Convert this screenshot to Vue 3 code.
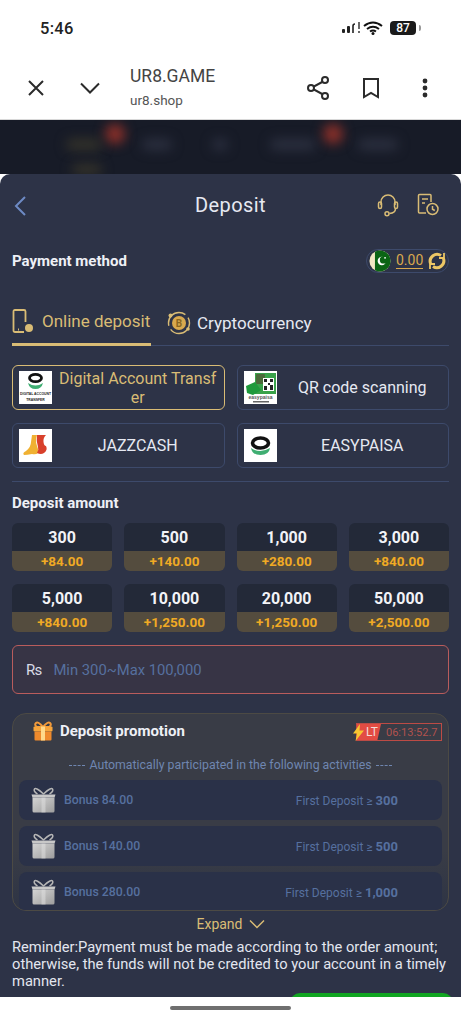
<template>
  <div class="phone">
    <!-- status bar -->
    <div class="status">
      <span class="time">5:46</span>
      <div class="status-right">
        <svg width="20" height="14" viewBox="0 0 20 14"><rect x="1" y="8" width="3" height="4" rx="1" fill="#222"/><rect x="6" y="5" width="3" height="7" rx="1" fill="#222"/><path d="M12 12V5q0-2 2-2" fill="none" stroke="#222" stroke-width="1.6"/><path d="M18 1v7M18 10v2" stroke="#444" stroke-width="1.6"/></svg>
        <svg width="20" height="14" viewBox="0 0 20 14"><path d="M1 5q9-7 18 0M4 8q6-4.500 12 0M7 10.500q3-2 6 0" fill="none" stroke="#111" stroke-width="2"/><circle cx="10" cy="12.500" r="1.500" fill="#111"/></svg>
        <div class="battery"><span>87</span></div>
        <i class="battery-tip"></i>
      </div>
    </div>

    <!-- browser bar -->
    <div class="browser">
      <svg class="close" width="18" height="18" viewBox="0 0 18 18"><path d="M2 2l14 14M16 2L2 16" stroke="#2b2b2b" stroke-width="2" fill="none"/></svg>
      <svg class="down" width="22" height="14" viewBox="0 0 22 14"><path d="M2 2.500l9 9 9-9" stroke="#2b2b2b" stroke-width="2" fill="none"/></svg>
      <div class="url">
        <div class="url-title">UR8.GAME</div>
        <div class="url-sub">ur8.shop</div>
      </div>
      <div class="b-actions">
        <svg width="24" height="26" viewBox="0 0 24 26"><path d="M19 5.500L5 13l14 7.500" stroke="#2b2b2b" stroke-width="2" fill="none"/><circle cx="19" cy="5" r="3" fill="#fff" stroke="#2b2b2b" stroke-width="2"/><circle cx="5" cy="13" r="3" fill="#fff" stroke="#2b2b2b" stroke-width="2"/><circle cx="19" cy="21" r="3" fill="#fff" stroke="#2b2b2b" stroke-width="2"/></svg>
        <svg width="18" height="22" viewBox="0 0 18 22"><path d="M2 2h14v18l-7-4-7 4z" stroke="#2b2b2b" stroke-width="2" fill="none"/></svg>
        <svg class="dots" width="8" height="20" viewBox="0 0 8 20"><circle cx="4" cy="3" r="2.400" fill="#2b2b2b"/><circle cx="4" cy="10" r="2.400" fill="#2b2b2b"/><circle cx="4" cy="17" r="2.400" fill="#2b2b2b"/></svg>
      </div>
    </div>

    <!-- blurred page behind the sheet -->
    <div class="backdrop">
      <i class="blur red r1"></i>
      <i class="blur red r2"></i>
      <i class="blur gold g1"></i>
      <i class="blur gold g2"></i>
      <i class="blur grey g3"></i>
      <i class="blur grey g4"></i>
      <i class="blur grey g5"></i>
      <i class="blur grey g6"></i>
    </div>

    <!-- deposit sheet -->
    <div class="sheet">
      <div class="head">
        <svg class="back" width="14" height="22" viewBox="0 0 14 22"><path d="M12 2L3 11l9 9" stroke="#6d8ac4" stroke-width="2" fill="none"/></svg>
        <span class="head-title">Deposit</span>
        <div class="head-icons">
          <svg width="22" height="24" viewBox="0 0 22 24" fill="none" stroke="#d9bc75" stroke-width="1.500"><path d="M4 12V9a7 7 0 0 1 14 0v3"/><rect x="1.500" y="9" width="3" height="6.500" rx="1.500"/><rect x="17.500" y="9" width="3" height="6.500" rx="1.500"/><path d="M18.500 15.500q0 4.500-6 5"/><circle cx="10" cy="20.800" r="2"/></svg>
          <svg width="22" height="23" viewBox="0 0 22 23" fill="none" stroke="#d9bc75" stroke-width="1.500"><path d="M9 20H2.500q-1 0-1-1V2.500q0-1 1-1H13q1 0 1 1V9"/><path d="M5 6h6M5 10h3"/><circle cx="15.500" cy="16" r="5.500"/><path d="M15.500 13v3.200l2.300 1.300"/></svg>
        </div>
      </div>

      <div class="pay-row">
        <span class="label">Payment method</span>
        <div class="balance">
          <svg width="22" height="22" viewBox="0 0 24 24"><circle cx="12" cy="12" r="11.500" fill="#f3e7c4"/><path d="M6.500 1.900A11.500 11.500 0 1 1 6.500 22.100z" fill="#0b6414"/><circle cx="14" cy="12" r="4.600" fill="#fff"/><circle cx="15.800" cy="10.800" r="4" fill="#0b6414"/><circle cx="17.500" cy="8.500" r="1" fill="#fff"/></svg>
          <span class="bal-num">0.00</span>
          <svg width="18" height="18" viewBox="0 0 18 18" fill="none" stroke="#edc765" stroke-width="3"><path d="M2.500 11.500A7 7 0 0 1 13 3.500"/><path d="M15.500 6.500A7 7 0 0 1 5 14.500"/><path d="M16 1v5h-5M2 17v-5h5" stroke-width="1.800"/></svg>
        </div>
      </div>

      <div class="tabs">
        <div class="tab active">
          <svg width="23" height="25" viewBox="0 0 23 25" fill="none" stroke="#d9bc75" stroke-width="1.800"><path d="M12 23H3q-1.500 0-1.500-1.500v-19Q1.500 1 3 1h9q1.500 0 1.500 1.500V13"/><circle cx="17" cy="19" r="4" fill="#d9bc75" stroke="none"/><path d="M6 20.500h1"/></svg>
          <span>Online deposit</span>
        </div>
        <div class="tab">
          <svg width="24" height="24" viewBox="0 0 24 24" fill="none"><circle cx="12" cy="12" r="10.500" stroke="#d9bc75" stroke-width="1.400" stroke-dasharray="26 4"/><circle cx="12" cy="12" r="7" fill="#d9a94e"/><text x="12" y="15.500" text-anchor="middle" class="btc">B</text><circle cx="3.500" cy="4.500" r="2" fill="#d9bc75"/><circle cx="21" cy="18" r="1.800" fill="#d9bc75"/></svg>
          <span>Cryptocurrency</span>
        </div>
      </div>

      <div class="methods">
        <div v-for="m in methods" :key="m.name" class="method" :class="{ on: m.on }">
          <div class="logo">
            <svg v-if="m.logo === 'digital'" width="33" height="33" viewBox="0 0 33 33"><ellipse cx="16.500" cy="7" rx="6" ry="3.700" fill="none" stroke="#111" stroke-width="2.800"/><path d="M9 12q7.500 5 15 0-1.500 6-7.500 6T9 12z" fill="#3fae72"/><text x="16.500" y="23.500" text-anchor="middle" class="logo-txt">DIGITAL ACCOUNT</text><text x="16.500" y="30" text-anchor="middle" class="logo-txt">TRANSFER</text></svg>
            <svg v-else-if="m.logo === 'qr'" width="33" height="33" viewBox="0 0 33 33"><rect x="11" y="2" width="21" height="21" fill="#39a24a"/><rect x="12" y="3" width="9" height="10" rx="1" fill="#4b6a3a"/><rect x="19" y="7" width="11" height="13" fill="#fff"/><path d="M20 8h3v3h-3zM26 8h3v3h-3zM20 15h3v4h-3zM24 12h2v2h-2zM26 14h3v5h-3z" fill="#222"/><path d="M2 15l9-4 6 8-8 5-6-2z" fill="#1f9a3c"/><text x="16.500" y="28" text-anchor="middle" class="logo-ep">easypaisa</text><rect x="9" y="30" width="16" height="1.500" fill="#666"/></svg>
            <svg v-else-if="m.logo === 'jazz'" width="33" height="33" viewBox="0 0 33 33"><path d="M13 6h5q-2 6 0 11t1 7q-2 2-6 1-5 1-8 1-2-2 2-4 5-4 5-9z" fill="#f0b132"/><path d="M18 6h9q-3 3-2.500 7t2.500 4q2 4-2 7-3 2-7 0 2-3 1-6-2-6-1-12z" fill="#d8402b"/></svg>
            <svg v-else width="33" height="33" viewBox="0 0 33 33"><ellipse cx="16.500" cy="14" rx="8" ry="5" fill="none" stroke="#111" stroke-width="3.600"/><path d="M7 19q9 6 19 0-1 7-9.500 7T7 19z" fill="#3fae72"/></svg>
          </div>
          <span class="m-name">{{ m.name }}</span>
        </div>
      </div>

      <div class="divider"></div>
      <div class="label amt-label">Deposit amount</div>

      <div class="amounts">
        <div v-for="a in amounts" :key="a.v" class="amount">
          <div class="a-top">{{ a.v }}</div>
          <div class="a-bot">{{ a.b }}</div>
        </div>
      </div>

      <div class="input">
        <span class="rs">Rs</span>
        <span class="ph">Min 300~Max 100,000</span>
      </div>

      <div class="promo">
        <div class="promo-head">
          <svg width="20" height="20" viewBox="0 0 20 20"><path d="M10 6Q5 0 3 2t1 4zM10 6q5-6 7-4t-1 4z" fill="none" stroke="#f29a3a" stroke-width="2"/><rect x="0.500" y="5.500" width="19" height="5" rx="1" fill="#f7a63c"/><rect x="1.500" y="10.500" width="17" height="9" rx="1" fill="#ef8a2c"/><rect x="8" y="5.500" width="4" height="14" fill="#ffd98a"/></svg>
          <span class="promo-title">Deposit promotion</span>
          <div class="timer">
            <span class="lt">LT</span>
            <span class="count">06:13:52.7</span>
            <svg class="bolt" width="11" height="17" viewBox="0 0 11 17"><path d="M7 0L0 9.500h4L2.500 17 11 6.500H6.500z" fill="#f7c631"/></svg>
          </div>
        </div>
        <div class="auto">
          <i></i>
          <span>Automatically participated in the following activities</span>
          <i></i>
        </div>
        <div class="rows">
          <div v-for="r in bonuses" :key="r.b" class="bonus">
            <svg class="silver" width="25" height="26" viewBox="0 0 25 26"><defs><linearGradient id="sg" x1="0" y1="0" x2="1" y2="1"><stop offset="0" stop-color="#d4d4d4"/><stop offset="1" stop-color="#9d9d9d"/></linearGradient></defs><path d="M12.500 7Q5 0 3.500 2t3 5M12.500 7Q20 0 21.500 2t-3 5" fill="none" stroke="#b5b5b5" stroke-width="1.500"/><path d="M0.500 7.500h24l-1 3h-22z" fill="#c8c8c8"/><path d="M1.500 10.500h22V24q0 1.500-1.500 1.500H3q-1.500 0-1.500-1.500z" fill="url(#sg)"/><rect x="10.500" y="10.500" width="4" height="15" fill="#e2e2e2" opacity=".5"/></svg>
            <span class="b-name">Bonus {{ r.b }}</span>
            <span class="b-cond">First Deposit ≥ <b>{{ r.min }}</b></span>
          </div>
        </div>
      </div>

      <div class="expand">
        <span>Expand</span>
        <svg width="16" height="10" viewBox="0 0 16 10"><path d="M1 1.500l7 7 7-7" stroke="#d9bc75" stroke-width="1.500" fill="none"/></svg>
      </div>
      <p class="reminder">Reminder:Payment must be made according to the order amount; otherwise, the funds will not be credited to your account in a timely manner.</p>
      <div class="green"></div>
    </div>

    <div class="home"><i></i></div>
  </div>
</template>

<script setup>
const methods = [
  { name: 'Digital Account Transfer', logo: 'digital', on: true },
  { name: 'QR code scanning', logo: 'qr' },
  { name: 'JAZZCASH', logo: 'jazz' },
  { name: 'EASYPAISA', logo: 'easy' },
]

const amounts = [
  { v: '300', b: '+84.00' },
  { v: '500', b: '+140.00' },
  { v: '1,000', b: '+280.00' },
  { v: '3,000', b: '+840.00' },
  { v: '5,000', b: '+840.00' },
  { v: '10,000', b: '+1,250.00' },
  { v: '20,000', b: '+1,250.00' },
  { v: '50,000', b: '+2,500.00' },
]

const bonuses = [
  { b: '84.00', min: '300' },
  { b: '140.00', min: '500' },
  { b: '280.00', min: '1,000' },
]
</script>

<style>
html, body { margin: 0; background: #fff; }
</style>

<style scoped>
.phone {
  width: 461px;
  height: 1024px;
  display: flex;
  flex-direction: column;
  overflow: hidden;
  position: relative;
  background: #fff;
  font-family: Roboto, "Liberation Sans", sans-serif;
}

/* status bar */
.status {
  height: 56px;
  flex: none;
  display: flex;
  align-items: center;
  justify-content: space-between;
  padding: 0 40px;
  box-sizing: border-box;
}
.time { font-size: 16.5px; font-weight: 500; color: #222; letter-spacing: .3px; }
.status-right { display: flex; align-items: center; gap: 2px; }
.battery {
  width: 26px;
  height: 14px;
  border-radius: 4px;
  background: #1a1a1a;
  color: #fff;
  font-size: 12px;
  font-weight: 500;
  text-align: center;
  line-height: 14px;
  margin-left: 5px;
}
.battery-tip { width: 2px; height: 6px; background: #999; border-radius: 0 2px 2px 0; margin-left: 1px; }

/* browser bar */
.browser {
  height: 64px;
  flex: none;
  display: flex;
  align-items: center;
  box-sizing: border-box;
  padding: 0 32px 0 27px;
  border-bottom: 1px solid #d8d8d8;
}
.close { margin-right: 34px; }
.down { margin-right: 29px; }
.url { flex: 1; }
.url-title { font-size: 17.5px; line-height: 20px; color: #444; }
.url-sub { font-size: 13.5px; line-height: 18px; color: #555; margin-top: 5px; }
.b-actions { display: flex; align-items: center; gap: 32px; }
.dots { margin-left: 9px; }

/* blurred backdrop */
.backdrop {
  height: 54px;
  flex: none;
  position: relative;
  overflow: hidden;
  background: #171b27;
}
.blur { position: absolute; display: block; filter: blur(6px); border-radius: 6px; }
.red { width: 20px; height: 20px; border-radius: 50%; background: #8d3029; top: 4px; }
.r1 { left: 105px; }
.r2 { left: 323px; }
.gold { background: #35332a; height: 11px; }
.g1 { left: 66px; top: 19px; width: 36px; }
.g2 { left: 72px; top: 44px; width: 30px; }
.grey { background: #2c3040; height: 11px; top: 19px; }
.g3 { left: 142px; width: 30px; }
.g4 { left: 212px; width: 16px; }
.g5 { left: 270px; width: 46px; }
.g6 { left: 358px; width: 40px; }

/* sheet */
.sheet {
  flex: 1;
  min-height: 0;
  background: #2d3347;
  border-radius: 10px 10px 0 0;
  padding: 0 12px;
  position: relative;
  overflow: hidden;
  z-index: 1;
}
.head {
  height: 63px;
  box-sizing: border-box;
  padding-bottom: 2px;
  display: flex;
  align-items: center;
  justify-content: center;
  position: relative;
}
.head-title { font-size: 20px; color: #e6e9f2; letter-spacing: .4px; }
.back { position: absolute; left: 1px; top: 21px; }
.head-icons { position: absolute; right: 10px; top: 19px; display: flex; gap: 18px; }

.pay-row {
  height: 49px;
  margin-top: -1px;
  display: flex;
  align-items: center;
  justify-content: space-between;
}
.label { font-size: 15px; font-weight: 700; color: #eef0f6; }
.balance {
  width: 83px;
  height: 24px;
  box-sizing: border-box;
  border: 1px solid #3d4a6b;
  border-radius: 12px;
  display: flex;
  align-items: center;
  gap: 5px;
  padding-left: 2px;
}
.bal-num { font-size: 14px; color: #d9a94e; border-bottom: 1px solid #d9a94e; line-height: 15px; }

.tabs {
  margin-top: 14px;
  height: 47px;
  box-sizing: border-box;
  border-bottom: 1px solid #3d4a6b;
  display: flex;
  gap: 16px;
}
.tab {
  display: flex;
  align-items: center;
  gap: 6px;
  font-size: 17px;
  color: #e6e9f2;
  height: 47px;
  box-sizing: border-box;
}
.tab.active { color: #d9bc75; width: 139px; gap: 7px; border-bottom: 3px solid #d9bc75; white-space: nowrap; }
.btc { font: 700 10px Roboto, sans-serif; fill: #8a6620; }

.methods {
  margin-top: 19px;
  display: grid;
  grid-template-columns: 1fr 1fr;
  gap: 13px 12px;
}
.method {
  height: 45px;
  box-sizing: border-box;
  border: 1px solid #3d4a6b;
  border-radius: 6px;
  display: flex;
  align-items: center;
  padding-left: 6px;
  color: #e6e9f2;
  font-size: 16px;
}
.method.on { border-color: #d9bc75; color: #d9bc75; }
.logo {
  width: 33px;
  height: 33px;
  flex: none;
  background: #fff;
  display: flex;
}
.logo-txt { font: 700 3.4px "Liberation Sans", sans-serif; fill: #222; }
.logo-ep { font: 700 5px "Liberation Sans", sans-serif; fill: #555; }
.m-name {
  flex: 1;
  min-width: 0;
  padding: 0 5px;
  text-align: center;
  line-height: 19px;
  word-break: break-all;
}

.divider { height: 1px; background: #3d4a6b; margin-top: 13px; }
.amt-label { margin-top: 13px; line-height: 17px; }

.amounts {
  margin-top: 11px;
  display: grid;
  grid-template-columns: repeat(4, 1fr);
  gap: 13px 12px;
}
.amount { border-radius: 6px; overflow: hidden; text-align: center; }
.a-top {
  height: 28px;
  background: #232938;
  color: #f2f3f7;
  font-size: 16px;
  font-weight: 700;
  line-height: 29px;
}
.a-bot {
  height: 20px;
  background: #544c3e;
  color: #f0aa24;
  font-size: 13.5px;
  font-weight: 700;
  line-height: 20px;
}

.input {
  margin-top: 13px;
  height: 49px;
  box-sizing: border-box;
  border: 1px solid #b95c5c;
  border-radius: 6px;
  background: #373445;
  display: flex;
  align-items: center;
  padding-left: 13px;
  gap: 12px;
}
.rs { font-size: 15px; color: #d8dbe6; letter-spacing: -.8px; }
.ph { font-size: 14.8px; color: #56709f; }

.promo {
  margin-top: 19px;
  height: 198px;
  box-sizing: border-box;
  border: 1px solid #4c4a44;
  border-radius: 14px;
  background: linear-gradient(#393c46, #393c46 70%, #2e3445);
  padding: 0 6px;
  overflow: hidden;
}
.promo-head {
  height: 34px;
  display: flex;
  align-items: center;
  padding-left: 14px;
  gap: 7px;
}
.promo-title { font-size: 15px; font-weight: 700; color: #eef0f6; flex: 1; }
.timer {
  position: relative;
  width: 86px;
  height: 18px;
  box-sizing: border-box;
  border: 1px solid #bd4b45;
  display: flex;
  align-items: center;
  font-size: 11px;
  margin-top: 2px;
}
.bolt { position: absolute; left: -4px; top: 0; }
.lt {
  width: 24px;
  height: 16px;
  box-sizing: border-box;
  padding-left: 9px;
  background: #e24c43;
  color: #f5dcd8;
  font-size: 12px;
  line-height: 16px;
  clip-path: polygon(0 0, 100% 0, 85% 100%, 0 100%);
  flex: none;
}
.count { color: #b2524e; margin-left: 5px; white-space: nowrap; }
.auto {
  margin-top: 9px;
  height: 16px;
  display: flex;
  align-items: center;
  justify-content: center;
  gap: 4px;
  font-size: 12.3px;
  color: #6f86b0;
}
.auto i { width: 16px; border-top: 1px dashed #6f86b0; }
.rows { margin-top: 7px; display: flex; flex-direction: column; gap: 6px; }
.bonus {
  height: 40px;
  border-radius: 8px;
  background: #2a3148;
  display: flex;
  align-items: center;
  padding-left: 12px;
  font-size: 12px;
  color: #56709f;
}
.silver { margin-right: 8px; }
.b-name { flex: 1; font-weight: 500; font-size: 12.3px; }
.b-cond { margin-right: 44px; }
.b-cond b { font-weight: 700; font-size: 13px; }

.expand {
  margin-top: 3px;
  height: 19px;
  display: flex;
  align-items: center;
  justify-content: center;
  gap: 6px;
  font-size: 14px;
  color: #d9bc75;
}
.reminder {
  margin: 6px -6px 0 0;
  font-size: 14.7px;
  line-height: 17px;
  color: #e3e6ef;
}
.green {
  position: absolute;
  left: 290px;
  top: 819px;
  width: 163px;
  height: 20px;
  border-radius: 10px;
  background: #11a521;
}

.home {
  height: 27px;
  flex: none;
  background: #fff;
  display: flex;
  justify-content: center;
  padding-top: 9px;
  box-sizing: border-box;
}
.home i { width: 121px; height: 4px; border-radius: 2px; background: #6f6f6f; }
</style>
